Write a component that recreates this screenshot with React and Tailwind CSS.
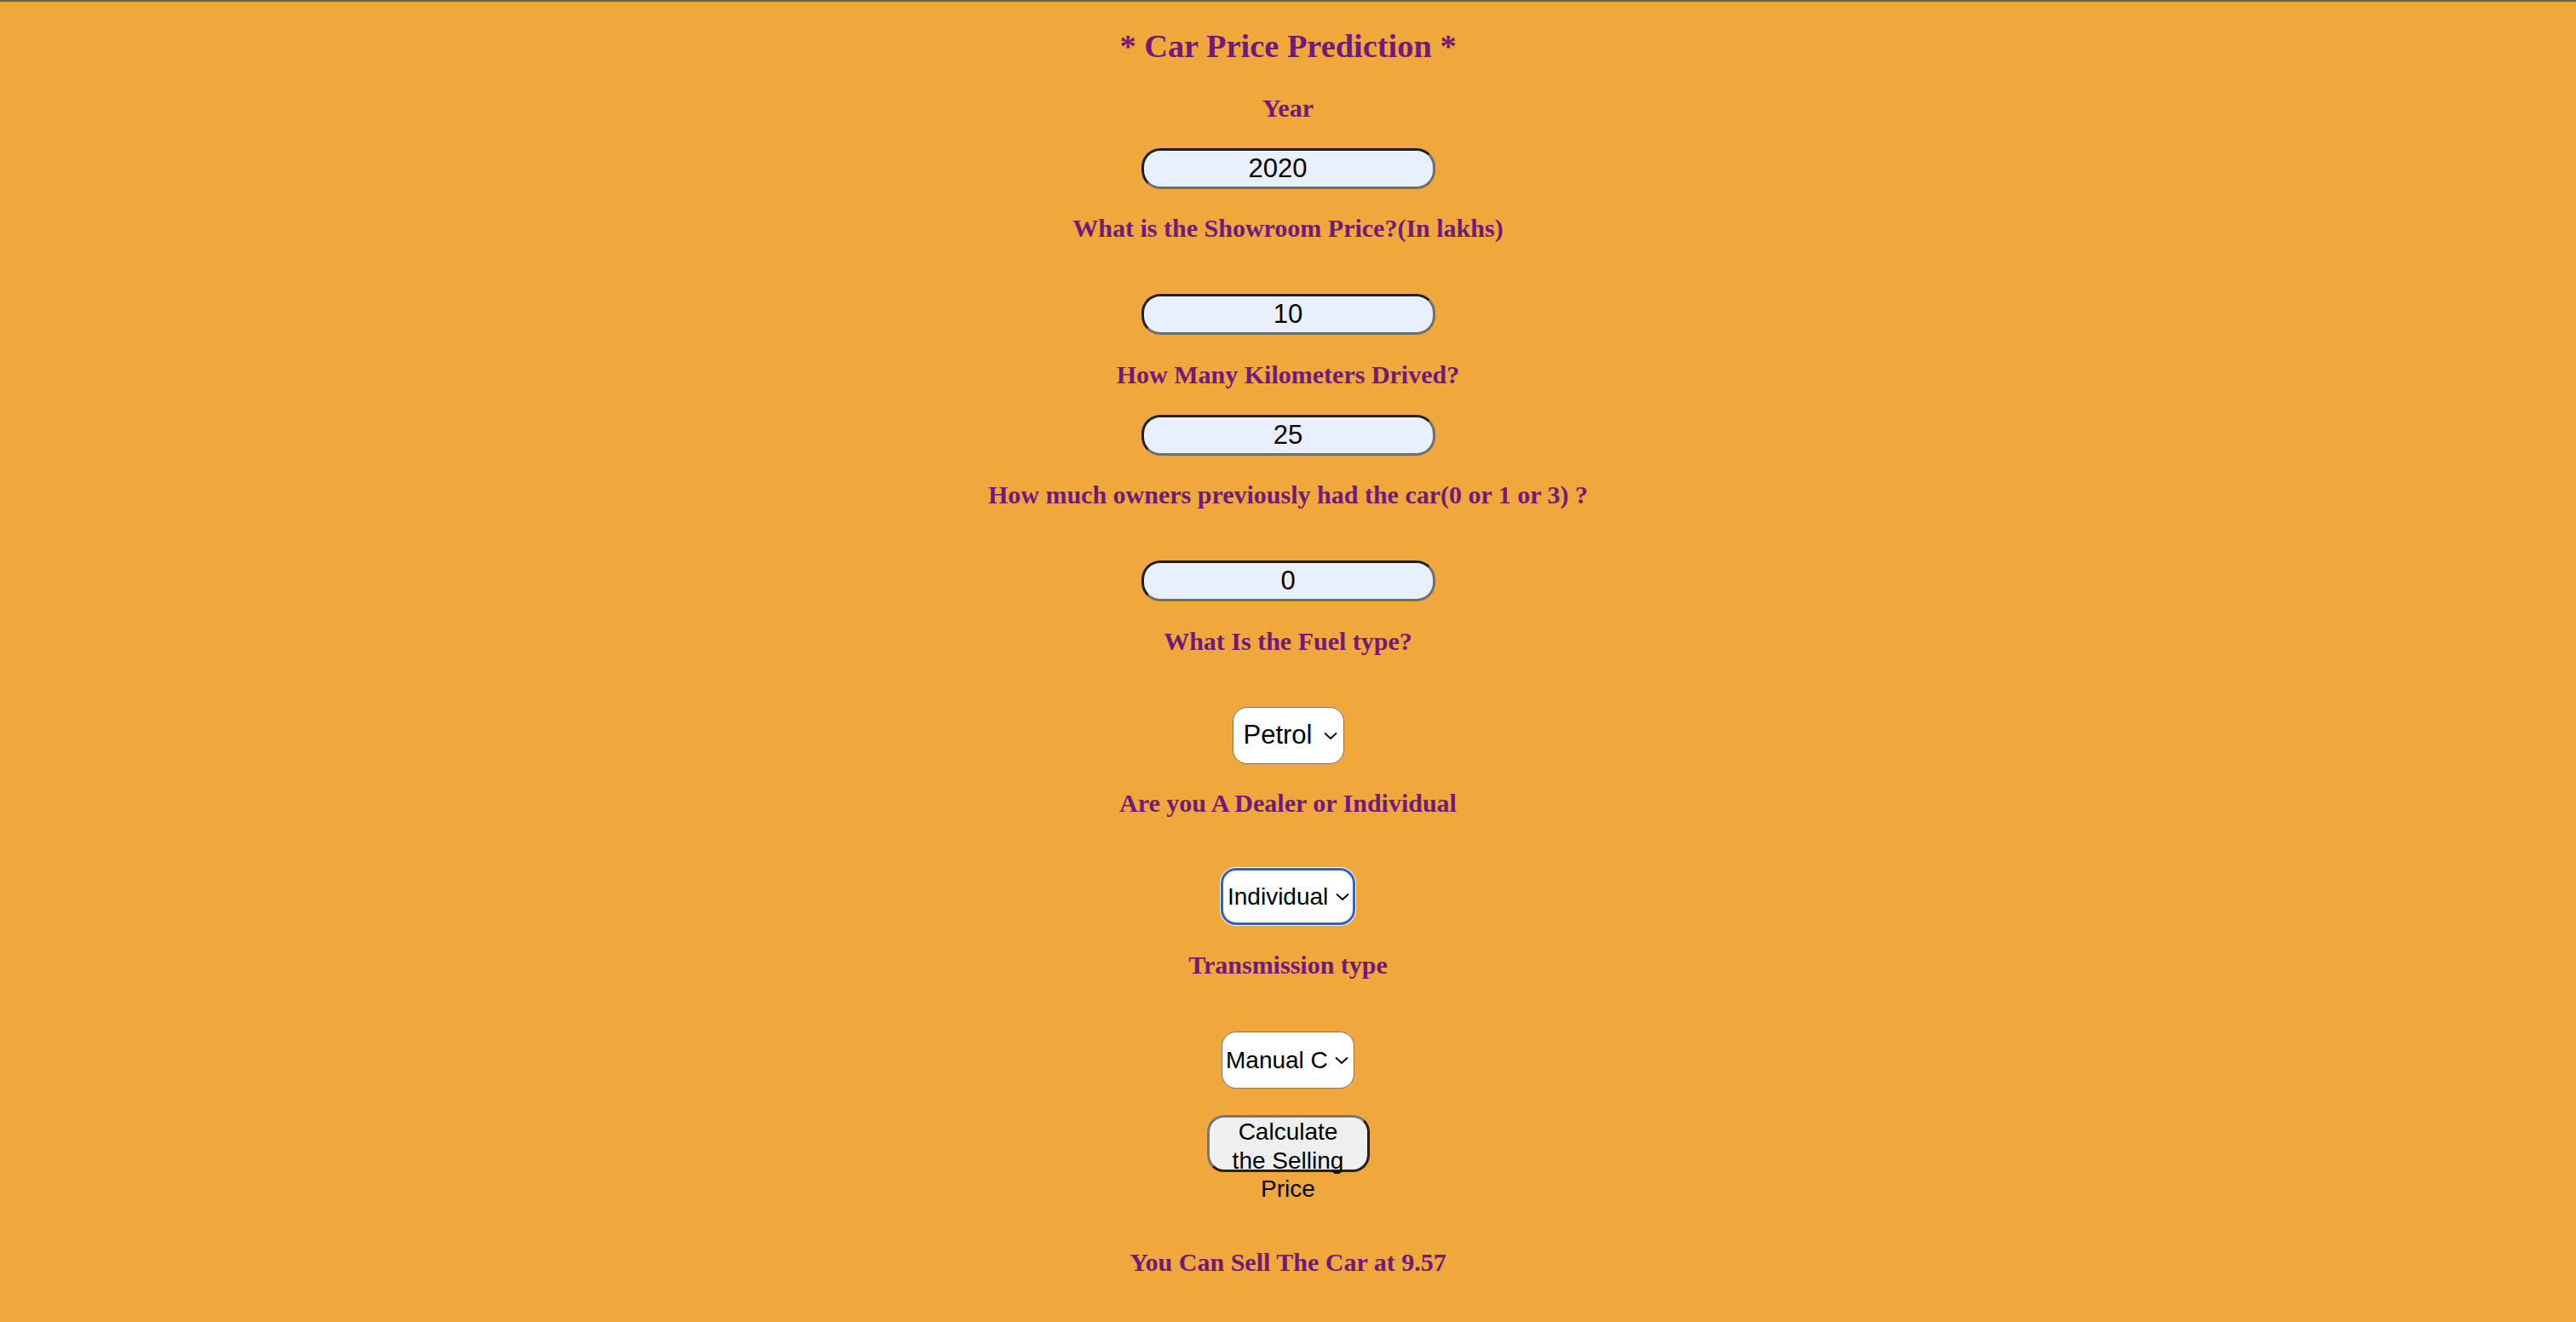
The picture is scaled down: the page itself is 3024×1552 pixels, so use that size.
import { useState } from "react"

const purple = "text-[#701a7c]"

function Label({ className, children }) {
  return (
    <h3 className={`${className} text-[30px] leading-[34px] font-bold ${purple}`}>
      {children}
    </h3>
  )
}

function Field({ value, className }) {
  const [v, setV] = useState(value)
  return (
    <input
      type="text"
      value={v}
      onChange={(e) => setV(e.target.value)}
      className={`${className} w-[345px] h-[48px] rounded-[22px] border-[3px] border-t-[#1f1f1f] border-l-[#1f1f1f] border-r-[#6e6e6e] border-b-[#6e6e6e] bg-[#e8f0fe] text-center text-[31px] text-black font-['Liberation_Sans',Arial,sans-serif] outline-none`}
    />
  )
}

function Chevron({ className }) {
  return (
    <svg
      className={`${className} absolute top-1/2 -translate-y-1/2 pointer-events-none`}
      width="16"
      height="10"
      viewBox="0 0 16 10"
      fill="none"
      stroke="#000"
      strokeWidth="1.8"
      strokeLinecap="round"
      strokeLinejoin="round"
    >
      <path d="M1.5 2l6.5 6 6.5-6" />
    </svg>
  )
}

function Select({ options, value, wrap, className, chevron }) {
  const [v, setV] = useState(value)
  return (
    <div className={`relative ${wrap}`}>
      <select
        value={v}
        onChange={(e) => setV(e.target.value)}
        className={`${className} appearance-none h-[67px] bg-white text-left text-black font-['Liberation_Sans',Arial,sans-serif] outline-none`}
      >
        {options.map((o) => (
          <option key={o} value={o}>
            {o}
          </option>
        ))}
      </select>
      <Chevron className={chevron} />
    </div>
  )
}

export default function App() {
  return (
    <div className="min-h-screen bg-[#f0a73b] flex flex-col items-center text-center font-['Liberation_Serif','Times_New_Roman',serif]">
      <div className="h-[2px] w-full bg-[#616161]" />
      <h2 className={`mt-[30px] text-[38.4px] leading-[44px] font-bold ${purple}`}>
        * Car Price Prediction *
      </h2>

      <Label className="mt-[34px]">Year</Label>
      <Field value="2020" className="mt-[30px] pr-[24px]" />

      <Label className="mt-[29px]">What is the Showroom Price?(In lakhs)</Label>
      <Field value="10" className="mt-[60px]" />

      <Label className="mt-[30px]">How Many Kilometers Drived?</Label>
      <Field value="25" className="mt-[30px]" />

      <Label className="mt-[29px]">How much owners previously had the car(0 or 1 or 3) ?</Label>
      <Field value="0" className="mt-[60px]" />

      <Label className="mt-[30px]">What Is the Fuel type?</Label>
      <Select
        options={["Petrol", "Diesel", "CNG"]}
        value="Petrol"
        wrap="mt-[60px]"
        className="w-[131px] rounded-[17px] border border-[#767676] pl-[12px] pr-[24px] text-[31px]"
        chevron="right-[8px]"
      />

      <Label className="mt-[29px]">Are you A Dealer or Individual</Label>
      <Select
        options={["Dealer", "Individual"]}
        value="Individual"
        wrap="mt-[59px]"
        className="w-[158px] rounded-[18px] border-[3px] border-[#2f63c9] shadow-[0_0_0_1px_#ffffff] pl-[5px] pr-[24px] text-[28px]"
        chevron="right-[7px]"
      />

      <Label className="mt-[30px]">Transmission type</Label>
      <Select
        options={["Manual Car", "Automatic Car"]}
        value="Manual Car"
        wrap="mt-[61px]"
        className="w-[156px] rounded-[17px] border border-[#767676] pl-[4px] pr-[29px] text-[28px]"
        chevron="right-[7px]"
      />

      <button
        type="button"
        className="mt-[31px] w-[191px] h-[67px] flex items-start justify-center rounded-[20px] border-[3px] border-t-[#777777] border-l-[#777777] border-b-[#222222] border-r-[#222222] bg-[#efefef] px-[14px] text-[28px] leading-[33.5px] text-black font-['Liberation_Sans',Arial,sans-serif]"
      >
        <span className="text-center">Calculate the Selling Price</span>
      </button>

      <Label className="mt-[89px]">You Can Sell The Car at 9.57</Label>
    </div>
  )
}
